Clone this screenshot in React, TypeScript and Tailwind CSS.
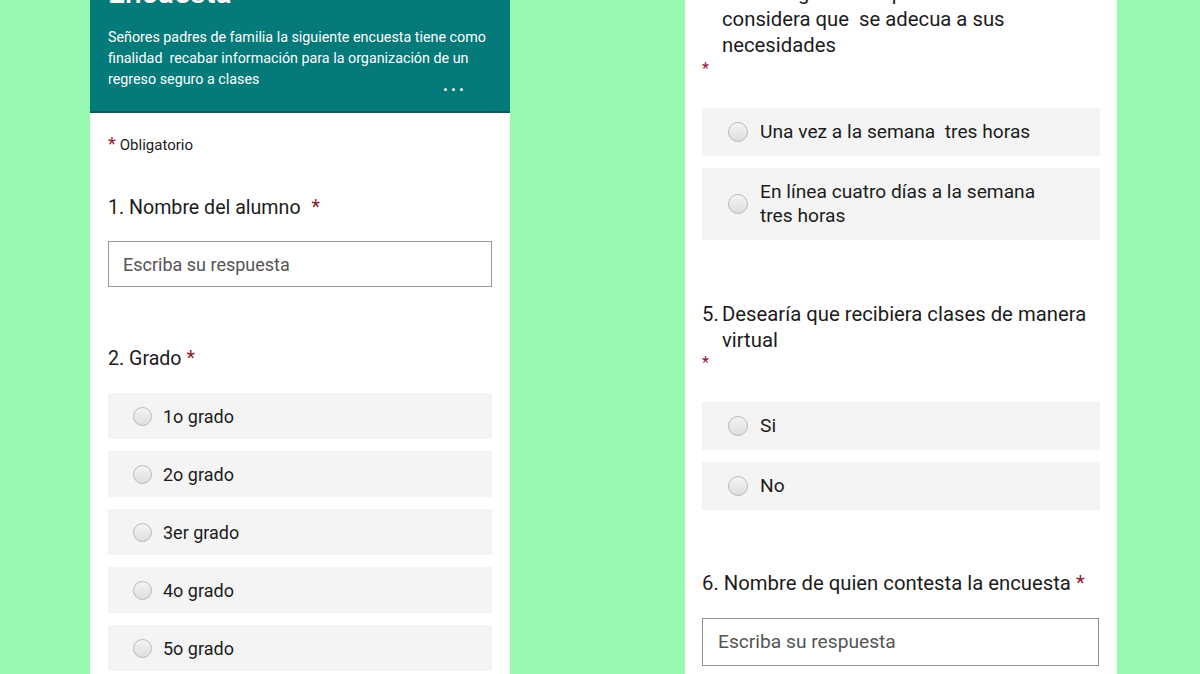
const font = { fontFamily: "Roboto, 'Noto Sans', sans-serif" };

function Radio({ size }: { size: number }) {
  return (
    <span
      className="shrink-0 rounded-full border border-[#b9b9b9] bg-gradient-to-b from-[#f4f4f4] to-[#dedede]"
      style={{ width: size, height: size }}
    />
  );
}

function Star({ className = "" }: { className?: string }) {
  return <span className={`text-[#8e1b2b] ${className}`}>*</span>;
}

const grados = ["1o grado", "2o grado", "3er grado", "4o grado", "5o grado"];

function LeftPanel() {
  return (
    <div className="ml-[90px] w-[420px] h-full bg-white flex flex-col shrink-0">
      <div className="bg-[#047a7a] border-b-2 border-[#0b5c5c] h-[113px] px-[18px] text-white flex flex-col">
        <p className="text-[30px] leading-[36px] -mt-[25px] font-medium">Encuesta</p>
        <p className="mt-[16px] text-[14.3px] leading-[21px] whitespace-pre-wrap">
          {"Señores padres de familia la siguiente encuesta tiene como\nfinalidad  recabar información para la organización de un\nregreso seguro a clases"}
        </p>
        <div className="flex justify-end pr-[29px] -mt-[2px] gap-[5px]">
          <span className="w-[3px] h-[3px] rounded-full bg-white" />
          <span className="w-[3px] h-[3px] rounded-full bg-white" />
          <span className="w-[3px] h-[3px] rounded-full bg-white" />
        </div>
      </div>
      <div className="px-[18px] text-[#1c1c1c]">
        <p className="mt-[21px] text-[15px] leading-[20px]">
          <Star className="text-[18px] mr-[4px]" />
          Obligatorio
        </p>
        <p className="mt-[40px] text-[19.6px] leading-[26px]">
          1. Nombre del alumno <Star className="ml-[6px]" />
        </p>
        <div className="mt-[20px] h-[46px] border border-[#9a9a9a] flex items-center px-[14px] text-[18px] text-[#555]">
          Escriba su respuesta
        </div>
        <p className="mt-[59px] text-[19.6px] leading-[26px]">
          2. Grado <Star />
        </p>
        <div className="mt-[21px] flex flex-col gap-[12px]">
          {grados.map((g) => (
            <div key={g} className="h-[46px] bg-[#f4f4f4] flex items-center pl-[25px] gap-[11px]">
              <Radio size={19} />
              <span className="text-[18px]">{g}</span>
            </div>
          ))}
        </div>
      </div>
    </div>
  );
}

function Option({ children }: { children: React.ReactNode }) {
  return (
    <div className="bg-[#f4f4f4] flex items-center pl-[26px] gap-[12px] py-[12px]">
      <Radio size={20} />
      <span className="text-[19.2px] leading-[24px] whitespace-pre-wrap">{children}</span>
    </div>
  );
}

function Question({ num, children }: { num: string; children: React.ReactNode }) {
  return (
    <div className="flex text-[20.3px] leading-[26px]">
      <span className="w-[20px] shrink-0">{num}</span>
      <span className="whitespace-pre-wrap">{children}</span>
    </div>
  );
}

function RightPanel() {
  return (
    <div className="ml-[175px] w-[432px] h-full bg-white px-[17px] text-[#1c1c1c] shrink-0">
      <div className="-mt-[20px]">
        <Question num="4.">
          De las siguientes opciones
          <br />
          {"considera que  se adecua a sus"}
          <br />
          necesidades
        </Question>
        <p className="text-[16px] leading-[20px] h-[20px] mt-[1px]">
          <Star />
        </p>
      </div>
      <div className="mt-[29px] flex flex-col gap-[12px]">
        <Option>{"Una vez a la semana  tres horas"}</Option>
        <Option>
          En línea cuatro días a la semana
          <br />
          tres horas
        </Option>
      </div>
      <div className="mt-[61px]">
        <Question num="5.">
          Desearía que recibiera clases de manera
          <br />
          virtual
        </Question>
        <p className="text-[16px] leading-[20px] h-[20px]">
          <Star />
        </p>
      </div>
      <div className="mt-[29px] flex flex-col gap-[12px]">
        <Option>Si</Option>
        <Option>No</Option>
      </div>
      <p className="mt-[60px] text-[20.3px] leading-[26px]">
        6. Nombre de quien contesta la encuesta <Star />
      </p>
      <div className="mt-[22px] h-[48px] w-[397px] border border-[#8f8f8f] flex items-center px-[15px] text-[19.2px] text-[#555]">
        Escriba su respuesta
      </div>
    </div>
  );
}

export default function App() {
  return (
    <div className="w-[1200px] h-[674px] overflow-hidden bg-[#97f9af] flex" style={font}>
      <LeftPanel />
      <RightPanel />
    </div>
  );
}
